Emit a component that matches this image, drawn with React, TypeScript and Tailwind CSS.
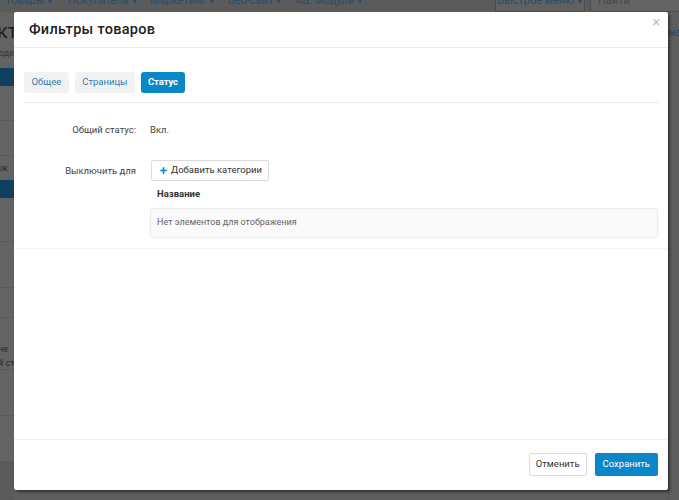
import { Plus } from "lucide-react";

const navItems = [
  { label: "Товары", w: "w-[63px]" },
  { label: "Покупатели", w: "w-[82px]" },
  { label: "Маркетинг", w: "w-[78px]" },
  { label: "Веб-сайт", w: "w-[67px]" },
  { label: "АВ: Модули", w: "w-[80px]" },
];

const Backdrop = () => {
  return (
    <div className="flex flex-col w-full h-full">
      <div className="flex flex-row h-[12px] bg-[#5b5b5b] overflow-hidden">
        <div className="flex flex-row pl-[5px] text-[11px] leading-[11px] text-[#2a4c6c] -mt-[5px]">
          {navItems.map((n) => (
            <span key={n.label} className={"whitespace-nowrap " + n.w}>
              {n.label} ▾
            </span>
          ))}
        </div>
        <div className="ml-auto flex flex-row h-[12px]">
          <div className="w-[90px] flex justify-center border-x border-b border-[#4e4e4e] bg-[#616161] text-[11px] leading-[11px] text-[#2a4c6c] overflow-hidden">
            <span className="-mt-[5px]">Быстрое меню ▾</span>
          </div>
          <div className="ml-[5px] w-[89px] pl-[7px] border-l border-b border-[#4e4e4e] bg-[#636363] text-[11px] leading-[11px] text-[#484848] overflow-hidden">
            <span className="block -mt-[5px]">Найти</span>
          </div>
        </div>
      </div>
      <div className="flex flex-row flex-1">
        <div className="w-[14px] flex flex-col bg-[#636363] overflow-hidden">
          <div className="h-[36px] pt-[8px] text-[20px] leading-[22px] text-[#1e1e1e] whitespace-nowrap -ml-[3px]">кт</div>
          <div className="h-[20px] text-[9px] leading-[10px] text-[#333] whitespace-nowrap -ml-[1px]">одер</div>
          <div className="h-[18px] bg-[#103f5f]"></div>
          <div className="h-[35px] border-b border-[#595959]"></div>
          <div className="h-[35px] border-b border-[#595959]"></div>
          <div className="h-[24px] text-[9px] leading-[24px] text-[#2a2a2a] whitespace-nowrap -ml-[4px]">аж</div>
          <div className="h-[18px] bg-[#103f5f]"></div>
          <div className="h-[44px] border-b border-[#595959]"></div>
          <div className="h-[46px] border-b border-[#595959]"></div>
          <div className="h-[30px] border-b border-[#595959]"></div>
          <div className="h-[52px] pt-[24px] text-[9px] leading-[14px] text-[#2a2a2a] whitespace-nowrap -ml-[2px] border-b border-[#595959]">
            не
            <br />й ст
          </div>
          <div className="h-[46px] border-b border-[#595959]"></div>
          <div className="h-[46px] border-b border-[#595959]"></div>
          <div className="flex-1 bg-[#5a5a5a]"></div>
        </div>
        <div className="flex-1 bg-[#5e5e5e]"></div>
        <div className="w-[11px] flex flex-col bg-[#5e5e5e] overflow-hidden">
          <div className="h-[34px] pt-[14px] text-[10px] leading-[14px] text-[#27496a] whitespace-nowrap">ма</div>
          <div className="flex-1 border-l border-[#555]"></div>
        </div>
      </div>
    </div>
  );
};

const Tab = ({ label, active }: { label: string; active?: boolean }) => (
  <div
    className={
      active
        ? "h-[21px] px-[7px] flex items-center rounded-[3px] bg-[#0a87c9] text-white font-bold tracking-[-0.1px]"
        : "h-[21px] px-[7.5px] flex items-center rounded-[3px] bg-[#f2f2f2] text-[#2d7db3]"
    }
  >
    {label}
  </div>
);

const App = () => {
  return (
    <div
      className="relative w-[679px] h-[500px] overflow-hidden bg-[#5e5e5e]"
      style={{ fontFamily: "Roboto, 'Liberation Sans', sans-serif" }}
    >
      <Backdrop />
      <div className="absolute left-[14px] top-[12px] w-[654px] h-[478px] bg-white flex flex-col shadow-[2px_2px_3px_rgba(0,0,0,0.45)] rounded-[2px]">
        <div className="relative h-[36px] flex items-center pl-[15px] border-b border-[#ececec]">
          <span className="text-[14.5px] font-medium text-[#222] tracking-[0.3px]">Фильтры товаров</span>
          <span className="absolute right-[8px] top-[3px] text-[14px] leading-[14px] text-[#bdbdbd]">×</span>
        </div>
        <div className="flex flex-col px-[10px] pt-[24px] text-[9.5px] border-b border-[#f5f5f5] h-[201px]">
          <div className="flex flex-row gap-[6px] pb-[9px] border-b border-[#e8e8e8]">
            <Tab label="Общее" />
            <Tab label="Страницы" />
            <Tab label="Статус" active />
          </div>
          <div className="flex flex-row items-center mt-[19px] h-[16px]">
            <div className="w-[112px] text-right text-[#444]">Общий статус:</div>
            <div className="ml-[14px] text-[#444]">Вкл.</div>
          </div>
          <div className="flex flex-row mt-[22px]">
            <div className="w-[112px] pt-[4px] text-right text-[#444]">Выключить для</div>
            <div className="ml-[14px] flex-1 flex flex-col">
              <div className="self-start h-[21px] flex items-center gap-[3px] pl-[7px] pr-[6px] ml-[1px] border border-[#dcdcdc] rounded-[2px] text-[#333]">
                <Plus size={9} strokeWidth={4.5} className="text-[#0a87c9]" />
                <span>Добавить категории</span>
              </div>
              <div className="pl-[7px] h-[27px] flex items-center font-bold text-[#333]">Название</div>
              <div className="h-[30px] flex items-center pl-[6px] bg-[#fafafa] border border-[#ededed] text-[#666] text-[9px]">
                Нет элементов для отображения
              </div>
            </div>
          </div>
        </div>
        <div className="flex-1 border-b border-[#f0f0f0]"></div>
        <div className="h-[50px] flex flex-row justify-end items-center gap-[8px] pr-[10px] pb-[1px] text-[9.5px]">
          <div className="h-[23px] px-[6px] flex items-center border border-[#dcdcdc] rounded-[2px] text-[#333] bg-white">
            Отменить
          </div>
          <div className="h-[23px] px-[8px] flex items-center rounded-[2px] bg-[#0a87c9] text-white">
            Сохранить
          </div>
        </div>
      </div>
    </div>
  );
};

export default App;
